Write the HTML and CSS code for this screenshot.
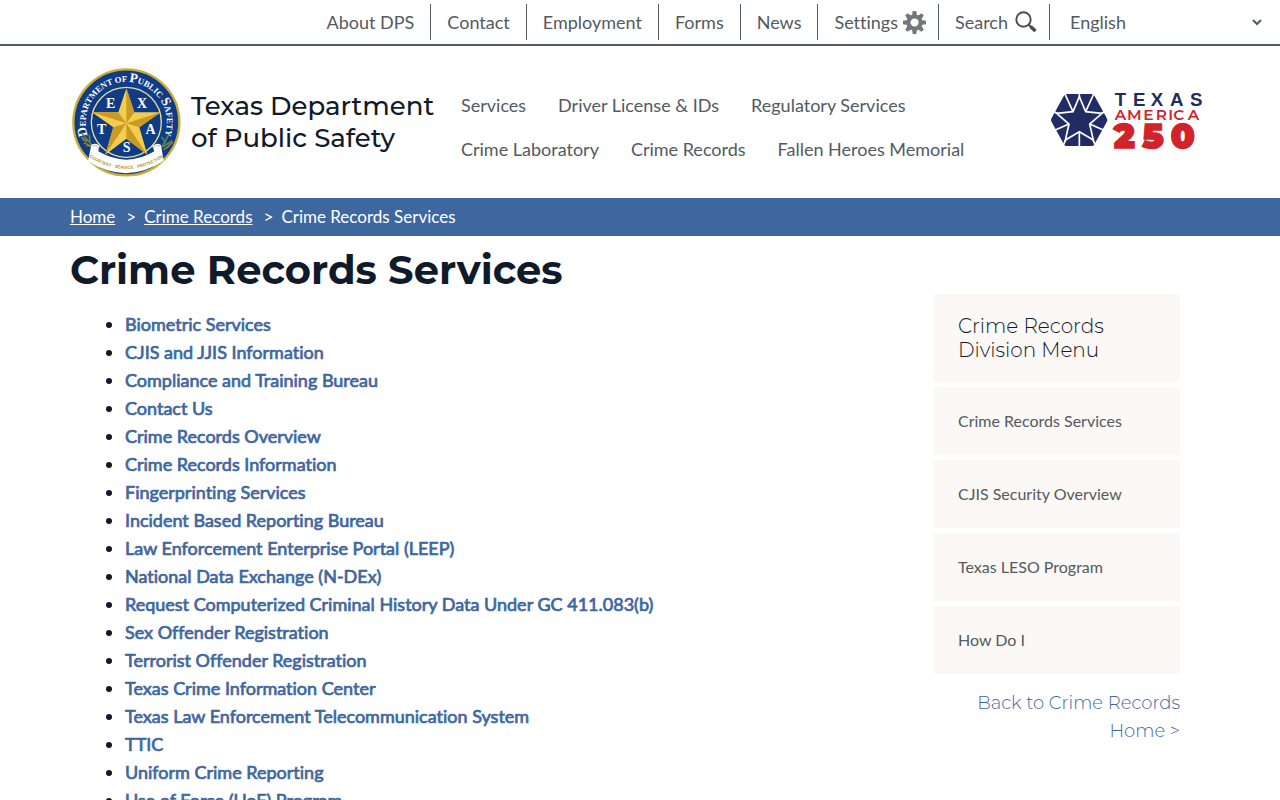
FILE: index.html
```html
<!DOCTYPE html>
<html lang="en">
<head>
<meta charset="utf-8">
<meta name="viewport" content="width=device-width, initial-scale=1">
<title>Crime Records Services | Department of Public Safety</title>
<link rel="stylesheet" href="styles.css">
</head>
<body>
<nav class="topbar" aria-label="Utility">
  <ul class="topbar-list">
    <li><a href="#">About DPS</a></li>
    <li><a href="#">Contact</a></li>
    <li><a href="#">Employment</a></li>
    <li><a href="#">Forms</a></li>
    <li><a href="#">News</a></li>
    <li><button type="button" class="settings">Settings
      <svg width="23" height="23" viewBox="0 0 24 24" aria-hidden="true"><g fill="#75787b"><path d="M10.2 0h3.6l.9 5H9.3z"/><path d="M10.2 24h3.6l.9-5H9.3z"/><path d="M0 10.2v3.6l5 .9V9.3z"/><path d="M24 10.2v3.6l-5 .9V9.3z"/><g transform="rotate(45 12 12)"><path d="M10.2 0h3.6l.9 5H9.3z"/><path d="M10.2 24h3.6l.9-5H9.3z"/><path d="M0 10.2v3.6l5 .9V9.3z"/><path d="M24 10.2v3.6l-5 .9V9.3z"/></g></g><circle cx="12" cy="12" r="6.3" fill="none" stroke="#75787b" stroke-width="4.2"/></svg></button></li>
    <li><button type="button" class="search">Search
      <svg width="22" height="22" viewBox="0 0 22 22" aria-hidden="true"><circle cx="8.5" cy="8.5" r="7.2" fill="none" stroke="#4a4c4e" stroke-width="1.9"/><path d="M13.5 13.5l2.5 2.5" stroke="#4a4c4e" stroke-width="2"/><path d="M15.5 15.5l5 4.5" stroke="#4a4c4e" stroke-width="3.6"/></svg></button></li>
  </ul>
  <select class="language" aria-label="Language"><option>English</option><option>Español</option></select>
</nav>

<header class="container masthead">
  <a class="brand" href="#">
    <svg class="seal" viewBox="0 0 330 330" aria-hidden="true">
      <defs>
        <path id="ring-text" d="M51 207A122 122 0 1 1 281 207"/>
        <path id="motto-path" d="M56 271Q166 341 276 271"/>
      </defs>
      <circle cx="166" cy="166" r="159" fill="#103c86" stroke="#c9ae3c" stroke-width="7"/>
      <circle cx="166" cy="166" r="105" fill="#103c86" stroke="#e4dda0" stroke-width="4"/>
      <text class="seal-ring"><textPath href="#ring-text" startOffset="50%" text-anchor="middle"><tspan class="seal-cap">D</tspan>EPARTMENT OF <tspan class="seal-cap">P</tspan>UBLIC <tspan class="seal-cap">S</tspan>AFETY</textPath></text>
      <path fill="#f4cd4f" d="M166 64L190 136L269 136L205 181L229 263L166 215L103 263L127 181L63 136L142 136Z"/>
      <path fill="#c99a25" d="M166 64L190 136L166 169ZM269 136L205 181L166 169ZM229 263L166 215L166 169ZM103 263L127 181L166 169ZM63 136L142 136L166 169Z"/>
      <g class="seal-letters">
        <text x="119" y="124">E</text><text x="213" y="124">X</text>
        <text x="92" y="202">T</text><text x="239" y="202">A</text><text x="167" y="256">S</text>
      </g>
      <g fill="none" stroke-width="5" stroke-linecap="round">
        <path stroke="#56864d" d="M34 200L67 240M36 218L50 222M48 236L64 238M55 205L57 223M274 238L292 205M277 239L302 222M283 227L273 211"/>
        <path stroke="#9a783c" d="M32 211L46 222M40 228L58 236M294 235L304 226M279 247L294 237"/>
      </g>
      <path fill="#fff" d="M61 233Q76 226 86 237L82 253Q166 303 250 253L244 238Q256 225 270 234L278 281Q166 355 51 283Z"/>
      <path fill="none" stroke="#bbbdb7" stroke-width="3" d="M64 237Q81 232 83 246M247 246Q250 232 267 237"/>
      <text class="seal-motto"><textPath href="#motto-path" startOffset="50%" text-anchor="middle">COURTESY · SERVICE · PROTECTION</textPath></text>
    </svg>
    <span class="brand-name">Texas Department<br>of Public Safety</span>
  </a>
  <nav class="mainnav" aria-label="Main">
    <a href="#">Services</a>
    <a href="#">Driver License &amp; IDs</a>
    <a href="#">Regulatory Services</a>
    <a href="#">Crime Laboratory</a>
    <a href="#">Crime Records</a>
    <a href="#">Fallen Heroes Memorial</a>
  </nav>
  <a class="anniversary" href="#" aria-label="Texas America 250">
    <svg viewBox="0 0 480 180" aria-hidden="true">
      <path fill="#222b62" stroke="#222b62" stroke-width="18" stroke-linejoin="round" d="M50 15H125L163 84L125 153H50L12 84Z"/>
      <path fill="none" stroke="#fff" stroke-width="5" d="M88 2V20M69 59L43 2M107 59L133 2M119 96L174 120M88 119V168M57 96L2 120M24 65L-3 51M152 65L179 51M48 142L36 167M128 142L140 167"/>
      <path fill="#222b62" stroke="#fff" stroke-width="5" d="M88 14L107 59L156 64L119 96L130 144L88 119L46 144L57 96L20 64L69 59Z"/>
      <text class="anniv-texas" y="43" x="194 249 302 360 420">TEXAS</text>
      <text class="anniv-america" y="85" x="194 231 280 317 355 370 413">AMERICA</text>
      <text class="anniv-number" y="167" x="191 277 362">250</text>
    </svg>
  </a>
</header>

<nav class="breadcrumb" aria-label="Breadcrumb">
  <ol class="container breadcrumb-list">
    <li><a href="#">Home</a></li>
    <li><a href="#">Crime Records</a></li>
    <li aria-current="page">Crime Records Services</li>
  </ol>
</nav>

<div class="container page">
  <main class="content">
    <h1>Crime Records Services</h1>
    <ul class="topics">
      <li><a href="#">Biometric Services</a></li>
      <li><a href="#">CJIS and JJIS Information</a></li>
      <li><a href="#">Compliance and Training Bureau</a></li>
      <li><a href="#">Contact Us</a></li>
      <li><a href="#">Crime Records Overview</a></li>
      <li><a href="#">Crime Records Information</a></li>
      <li><a href="#">Fingerprinting Services</a></li>
      <li><a href="#">Incident Based Reporting Bureau</a></li>
      <li><a href="#">Law Enforcement Enterprise Portal (LEEP)</a></li>
      <li><a href="#">National Data Exchange (N-DEx)</a></li>
      <li><a href="#">Request Computerized Criminal History Data Under GC 411.083(b)</a></li>
      <li><a href="#">Sex Offender Registration</a></li>
      <li><a href="#">Terrorist Offender Registration</a></li>
      <li><a href="#">Texas Crime Information Center</a></li>
      <li><a href="#">Texas Law Enforcement Telecommunication System</a></li>
      <li><a href="#">TTIC</a></li>
      <li><a href="#">Uniform Crime Reporting</a></li>
      <li><a href="#">Use of Force (UoF) Program</a></li>
    </ul>
  </main>
  <aside class="sidebar">
    <h2>Crime Records Division Menu</h2>
    <a class="side-link" href="#">Crime Records Services</a>
    <a class="side-link" href="#">CJIS Security Overview</a>
    <a class="side-link" href="#">Texas LESO Program</a>
    <a class="side-link" href="#">How Do I</a>
    <a class="back" href="#">Back to Crime Records Home &gt;</a>
  </aside>
</div>
</body>
</html>
```

FILE: styles.css
```css
* { box-sizing: border-box; }

body {
  margin: 0;
  background: #fff;
  color: #0f1a2a;
  font: 18px/28px Lato, "Open Sans", sans-serif;
  font-variant-ligatures: none;
}

a { color: inherit; text-decoration: none; }

.container {
  width: 100%;
  max-width: 1140px;
  margin: 0 auto;
}

/* Utility bar */
.topbar {
  display: flex;
  justify-content: flex-end;
  align-items: center;
  padding: 4px 15px 4px 0;
  border-bottom: 2px solid #535a61;
  color: #535a61;
}

.topbar-list {
  display: flex;
  margin: 0;
  padding: 0;
  list-style: none;
  line-height: 36px;
}

.topbar-list li {
  padding: 0 16px;
  border-right: 1px solid #535a61;
}

.topbar-list li:nth-child(n+6) { padding-right: 12px; }

.topbar button {
  display: flex;
  align-items: center;
  gap: 5px;
  padding: 0;
  border: 0;
  background: none;
  color: inherit;
  font: inherit;
}

.topbar .search { gap: 7px; }

.language {
  width: 199px;
  height: 36px;
  margin-left: 16px;
  border: 0;
  background: #fff;
  color: #535a61;
  font: inherit;
}

/* Logo, main navigation */
.masthead {
  display: flex;
  align-items: center;
  padding: 20px 0;
}

.brand {
  display: flex;
  align-items: center;
  gap: 10px;
  flex: none;
  width: 391px;
  padding-left: 1px;
}

.seal { width: 110px; height: 112px; flex: none; }

.brand-name {
  font: 500 26px/32px Montserrat, Inter, sans-serif;
  white-space: nowrap;
}

.seal-ring { fill: #fff; font: bold 26px "Liberation Serif", serif; }
.seal-cap { font-size: 40px; }
.seal-letters { fill: #fff; font: bold 42px "Liberation Serif", serif; text-anchor: middle; }
.seal-motto { fill: #b8922c; font: bold 13px "Liberation Sans", sans-serif; }

.mainnav {
  display: flex;
  flex: 1;
  flex-wrap: wrap;
  column-gap: 32px;
  padding-top: 10px;
  color: #535a61;
  line-height: 44px;
}

.anniversary { flex: none; width: 160px; }
.anniversary svg { display: block; width: 160px; height: 60px; overflow: visible; }
.anniv-texas { fill: #222b62; font: bold 56px "Liberation Sans", sans-serif; }
.anniv-america { fill: #d2232a; font: 600 46px Montserrat, sans-serif; }
.anniv-number { fill: #d2232a; stroke: #d2232a; stroke-width: 4px; font: 900 104px Montserrat, sans-serif; }

/* Breadcrumb */
.breadcrumb { background: #3f679f; color: #fff; font-size: 17px; }

.breadcrumb-list {
  display: flex;
  padding: 5px 0;
  list-style: none;
}

.breadcrumb-list a { text-decoration: underline; }
.breadcrumb-list li + li::before { content: ">"; margin: 0 8px 0 11px; }

/* Page body */
.page {
  display: flex;
  justify-content: space-between;
  padding-right: 30px;
}

h1 {
  margin: 10px 0 0;
  font: bold 40px/48px Montserrat, Inter, sans-serif;
}

.topics {
  margin: 16px 0 40px;
  padding-left: 55px;
}

/* Regular cut with thickened strokes keeps the regular letter widths */
.topics a { color: #3f679f; -webkit-text-stroke: 0.04em #3f679f; }

.sidebar {
  display: flex;
  flex-direction: column;
  gap: 5px;
  flex: none;
  width: 247px;
  margin-top: 58px;
}

.sidebar h2 {
  margin: 0;
  padding: 20px 25px;
  background: #fcf8f5;
  font: 300 20px/24px Montserrat, Inter, sans-serif;
}

.side-link {
  padding: 20px 25px;
  background: #fcf8f5;
  color: #535a61;
  font-size: 16px;
}

.back {
  margin-top: 10px;
  color: #3f679f;
  font: 300 18px/28px Montserrat, Inter, sans-serif;
  text-align: right;
}
```
